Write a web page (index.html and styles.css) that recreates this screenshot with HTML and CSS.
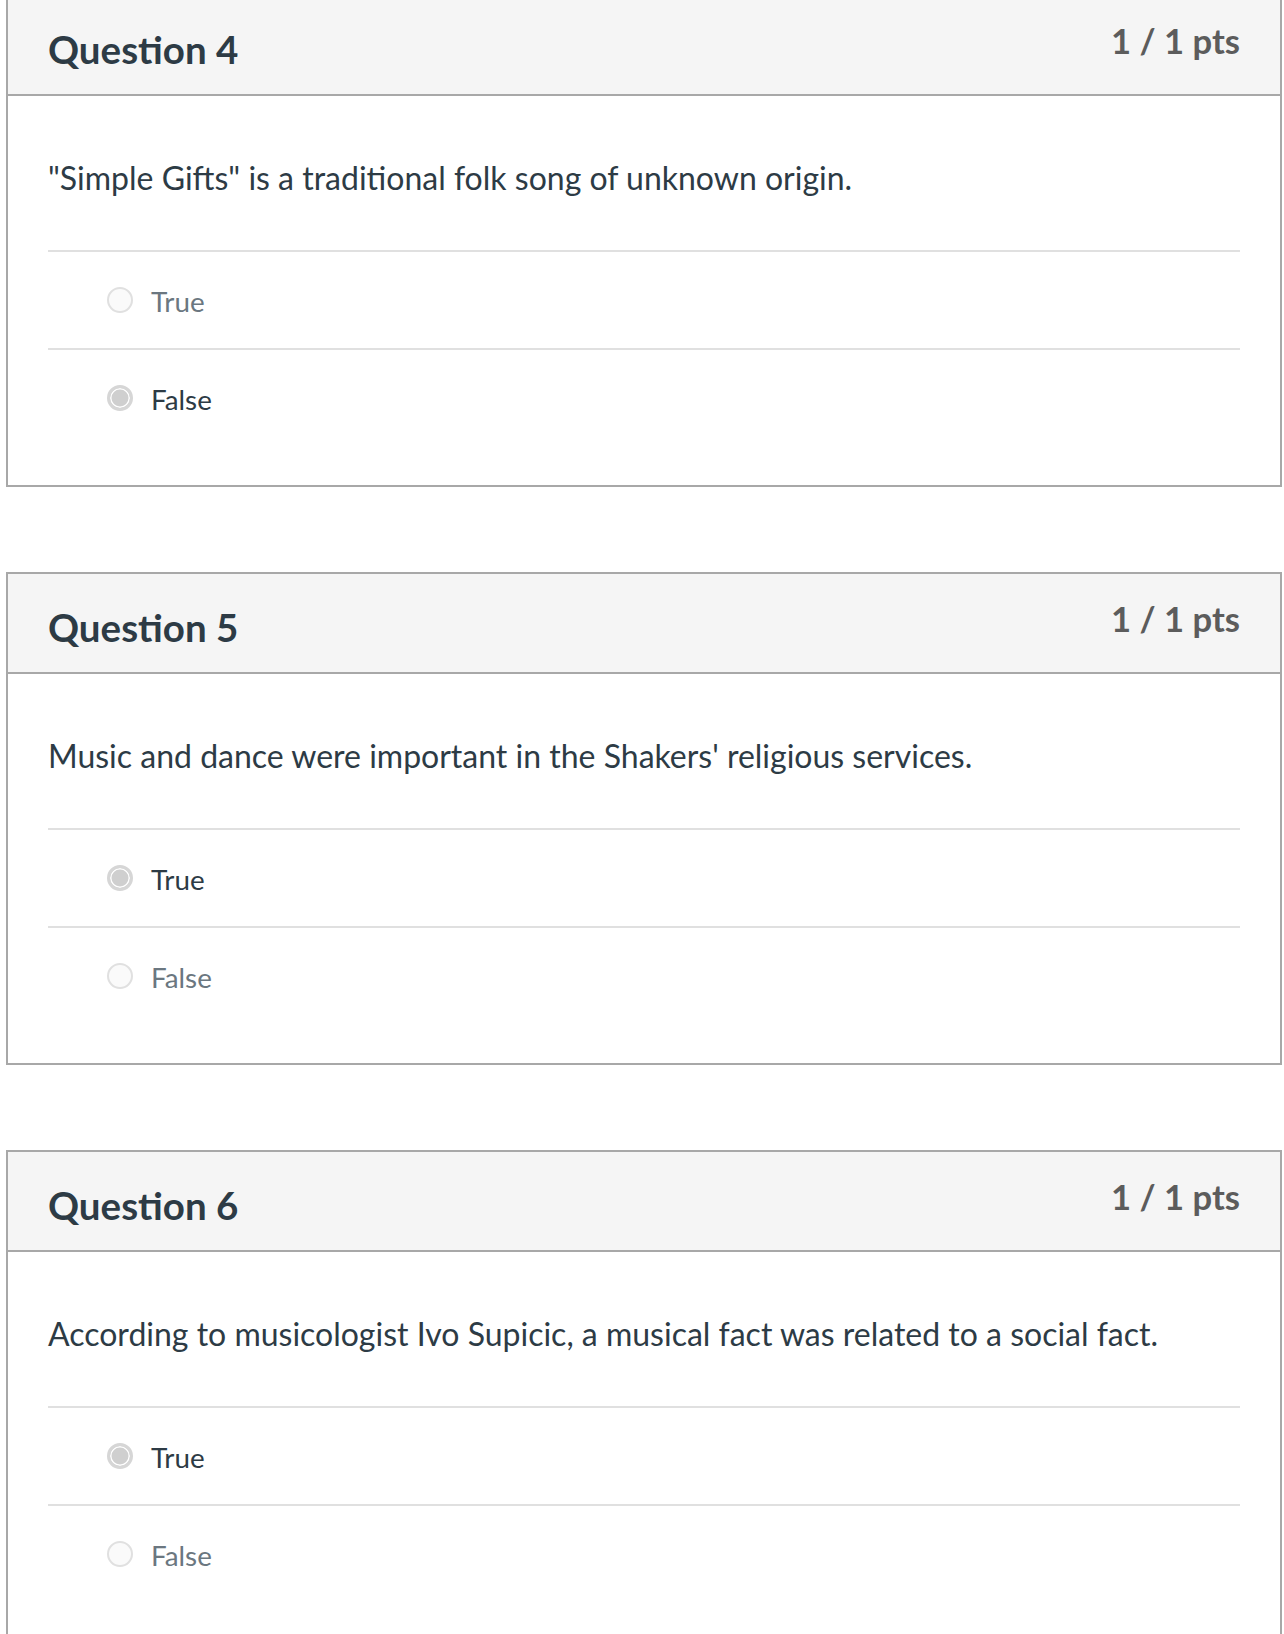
FILE: index.html
```html
<!DOCTYPE html>
<html lang="en">
<head>
<meta charset="utf-8">
<title>Quiz results</title>
<link rel="stylesheet" href="styles.css">
</head>
<body>
<div class="quiz">
  <section class="question">
    <header class="q-header">
      <h2 class="q-title">Question 4</h2>
      <div class="q-pts">1 / 1 pts</div>
    </header>
    <div class="q-body">
      <p class="q-text">"Simple Gifts" is a traditional folk song of unknown origin.</p>
      <div class="answers">
        <div class="answer"><span class="radio"></span><span class="label">True</span></div>
        <div class="answer selected"><span class="radio"></span><span class="label">False</span></div>
      </div>
    </div>
  </section>

  <section class="question">
    <header class="q-header">
      <h2 class="q-title">Question 5</h2>
      <div class="q-pts">1 / 1 pts</div>
    </header>
    <div class="q-body">
      <p class="q-text">Music and dance were important in the Shakers' religious services.</p>
      <div class="answers">
        <div class="answer selected"><span class="radio"></span><span class="label">True</span></div>
        <div class="answer"><span class="radio"></span><span class="label">False</span></div>
      </div>
    </div>
  </section>

  <section class="question">
    <header class="q-header">
      <h2 class="q-title">Question 6</h2>
      <div class="q-pts">1 / 1 pts</div>
    </header>
    <div class="q-body">
      <p class="q-text">According to musicologist Ivo Supicic, a musical fact was related to a social fact.</p>
      <div class="answers">
        <div class="answer selected"><span class="radio"></span><span class="label">True</span></div>
        <div class="answer"><span class="radio"></span><span class="label">False</span></div>
      </div>
    </div>
  </section>
</div>
</body>
</html>
```

FILE: styles.css
```css
html, body {
  margin: 0;
  padding: 0;
  background: #ffffff;
}

body {
  font-family: Lato, "Open Sans", "Liberation Sans", sans-serif;
  color: #2d3b45;
  overflow: hidden;
}

.quiz {
  margin-top: -6px;
  padding-left: 6px;
  display: flex;
  flex-direction: column;
  gap: 85px;
}

.question {
  width: 1276px;
  box-sizing: border-box;
  border: 2px solid #a8a8a8;
  background: #ffffff;
}

.q-header {
  height: 98px;
  box-sizing: content-box;
  background: #f5f5f5;
  border-bottom: 2px solid #a8a8a8;
  display: flex;
  justify-content: space-between;
  align-items: flex-start;
  padding: 0 40px;
}

.q-title {
  margin: 0;
  padding-top: 30px;
  font-size: 38.5px;
  line-height: 1.2;
  font-weight: 700;
  color: #2d3b45;
}

.q-pts {
  padding-top: 24px;
  font-size: 34.6px;
  line-height: 1.2;
  font-weight: 700;
  color: #5c5c5c;
}

.q-body {
  padding: 0 40px 39px;
}

.q-text {
  margin: 0;
  height: 154px;
  box-sizing: border-box;
  padding-top: 63px;
  font-size: 32px;
  line-height: 1.2;
  color: #2d3b45;
}

.answers {
  display: flex;
  flex-direction: column;
}

.answer {
  height: 96px;
  border-top: 2px solid #e0e0e0;
  display: flex;
  align-items: center;
  gap: 18px;
  padding-left: 59px;
}

.radio {
  width: 26px;
  height: 26px;
  box-sizing: border-box;
  border-radius: 50%;
  border: 2px solid #e0e0e0;
  background: #fafafa;
  flex: none;
}

.answer.selected .radio {
  border: 3px solid #d6d6d6;
  background: #cfcfcf;
  box-shadow: inset 0 0 0 1.5px #ffffff;
}

.label {
  font-size: 27.8px;
  line-height: 1.2;
  color: #6b7780;
  padding-top: 3px;
}

.answer.selected .label {
  color: #2d3b45;
}
```
